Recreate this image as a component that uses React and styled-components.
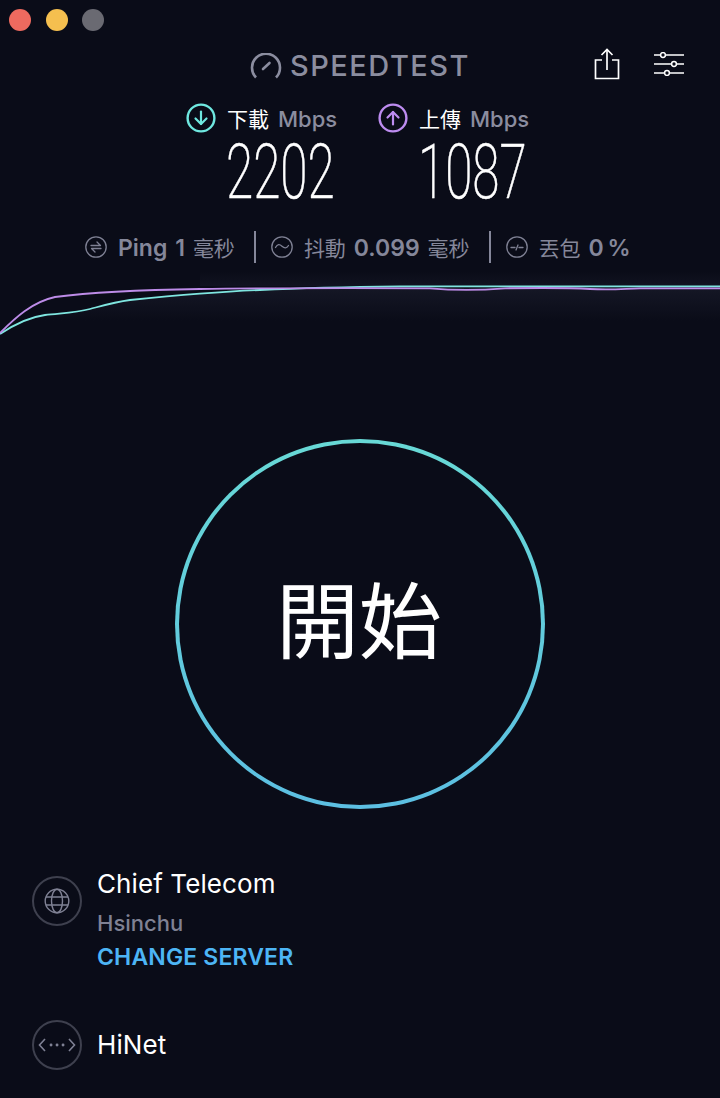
import styled, { createGlobalStyle } from "styled-components";

const GlobalStyle = createGlobalStyle`
  * {
    box-sizing: border-box;
  }

  body {
    margin: 0;
    background: #0a0c18;
    font-family: "Inter", "Noto Sans CJK TC", sans-serif;
  }
`;

function ArrowCircle({ color, up }) {
  return (
    <svg width="30" height="30" viewBox="0 0 30 30" fill="none" stroke={color}>
      <circle cx="15" cy="15" r="13.4" strokeWidth="2.4" />
      <g strokeWidth="2.2" strokeLinecap="round" strokeLinejoin="round" transform={up ? "rotate(180 15 15)" : undefined}>
        <path d="M15 8.5V21" />
        <path d="M9.5 15.5L15 21l5.5-5.5" />
      </g>
    </svg>
  );
}

function StatIcon({ children }) {
  return (
    <svg width="22" height="22" viewBox="0 0 22 22" fill="none" stroke="#7f8194" strokeWidth="1.3" strokeLinecap="round">
      <circle cx="11" cy="11" r="10.2" />
      {children}
    </svg>
  );
}

export default function App() {
  return (
    <>
      <GlobalStyle />
      <Page>
        <TitleBar>
          <Dot color="#ee6a5f" />
          <Dot color="#f5bf4f" />
          <Dot color="#6a6a72" />
        </TitleBar>

        <Header>
          <Logo>
            <svg width="32" height="26" viewBox="0 0 32 26" fill="none" stroke="#8b8d9f" strokeWidth="2.6" strokeLinecap="round">
              <path d="M6 24.5A14 14 0 1 1 26 24.5" strokeLinecap="butt" />
              <path d="M13 16l6.5-6" />
            </svg>
            <LogoText>SPEEDTEST</LogoText>
          </Logo>
          <Actions>
            <svg width="26" height="32" viewBox="0 0 26 32" fill="none" stroke="#fff" strokeWidth="1.7">
              <path d="M8 12H1.5v18.5h23V12H18" />
              <path d="M13 22V1.5" />
              <path d="M7.5 7L13 1.5 18.5 7" />
            </svg>
            <svg width="30" height="24" viewBox="0 0 30 24" fill="none" stroke="#fff" strokeWidth="1.5">
              <path d="M0 3h6M12 3h18M0 12h17M23 12h7M0 21h10M16 21h14" />
              <circle cx="9" cy="3" r="2.4" />
              <circle cx="20" cy="12" r="2.4" />
              <circle cx="13" cy="21" r="2.4" />
            </svg>
          </Actions>
        </Header>

        <Speeds>
          <Speed>
            <SpeedLabel>
              <ArrowCircle color="#6fe8e0" />
              <SpeedName>下載</SpeedName>
              <Unit>Mbps</Unit>
            </SpeedLabel>
            <SpeedValue>2202</SpeedValue>
          </Speed>
          <Speed>
            <SpeedLabel>
              <ArrowCircle color="#bd8cf0" up />
              <SpeedName>上傳</SpeedName>
              <Unit>Mbps</Unit>
            </SpeedLabel>
            <SpeedValue>1087</SpeedValue>
          </Speed>
        </Speeds>

        <Stats>
          <Stat>
            <StatIcon>
              <path d="M6 9.5h9.5L12 6M16 12.5H6.5L10 16" strokeLinejoin="round" />
            </StatIcon>
            <StatText>
              <b>Ping</b> <b>1</b> 毫秒
            </StatText>
          </Stat>
          <Divider />
          <Stat>
            <StatIcon>
              <path d="M4.5 11.5c2-3.5 4-3.5 6.5-1.2s4.5 2.3 6.5-.8" />
            </StatIcon>
            <StatText>
              抖動 <b>0.099</b> 毫秒
            </StatText>
          </Stat>
          <Divider />
          <Stat>
            <StatIcon>
              <path d="M5 11.5h4M13 11.5h4M10 14l2-5" />
            </StatIcon>
            <StatText>
              丟包 <Percent>0 %</Percent>
            </StatText>
          </Stat>
        </Stats>

        <Chart>
          <svg width="720" height="70" viewBox="0 270 720 70" fill="none">
            <defs>
              <linearGradient id="glowDown" x1="0" y1="0" x2="0" y2="1">
                <stop offset="0" stopColor="#1a1c2c" stopOpacity="0.7" />
                <stop offset="0.65" stopColor="#1a1c2c" stopOpacity="0" />
              </linearGradient>
              <linearGradient id="glowUp" x1="0" y1="1" x2="0" y2="0">
                <stop offset="0" stopColor="#1a1c2c" stopOpacity="0.4" />
                <stop offset="1" stopColor="#1a1c2c" stopOpacity="0" />
              </linearGradient>
            </defs>
            <rect x="200" y="272" width="520" height="15" fill="url(#glowUp)" />
            <path
              d="M0 335C15 325 30 318 45 316C62 314 75 314 90 310C105 306 115 303 130 301C170 297 210 293 260 291C300 289 330 288.5 360 288.5L720 288V340H0Z"
              fill="url(#glowDown)"
            />
            <path
              d="M0 335C15 325 30 318 45 316C62 314 75 314 90 310C105 306 115 303 130 301C170 297 210 293 260 291C300 289 330 288 400 287.3L720 287.3"
              stroke="#7fe6e0"
              strokeWidth="1.8"
            />
            <path
              d="M0 334C15 319 32 303 55 298C85 294 130 291 200 290C260 289 320 289 430 289.3C450 291 480 291.2 505 289.3C540 288.8 570 288.8 590 290C610 291.2 620 290 640 289.3L720 289.3"
              stroke="#bd8ce8"
              strokeWidth="1.8"
            />
          </svg>
        </Chart>

        <Start>開始</Start>

        <Servers>
          <Server>
            <ServerIcon>
              <svg width="26" height="26" viewBox="0 0 26 26" fill="none" stroke="#7f8194" strokeWidth="1.4">
                <circle cx="13" cy="13" r="11.8" />
                <ellipse cx="13" cy="13" rx="5.5" ry="11.8" />
                <path d="M2 9h22M2 17h22" />
              </svg>
            </ServerIcon>
            <ServerInfo>
              <ServerName>Chief Telecom</ServerName>
              <ServerCity>Hsinchu</ServerCity>
              <ChangeServer>CHANGE SERVER</ChangeServer>
            </ServerInfo>
          </Server>
          <Server center>
            <ServerIcon>
              <svg width="38" height="16" viewBox="0 0 38 16" fill="none" stroke="#7f8194" strokeWidth="1.6">
                <path d="M7 2L1.5 8L7 14M31 2L36.5 8L31 14" />
                <path d="M13 8h.1M19 8h.1M25 8h.1" strokeWidth="2.8" strokeLinecap="round" />
              </svg>
            </ServerIcon>
            <ServerName>HiNet</ServerName>
          </Server>
        </Servers>
      </Page>
    </>
  );
}

const Page = styled.div`
  width: 720px;
  height: 1098px;
  overflow: hidden;
  background: #0a0c18;
  color: #ffffff;
`;

const TitleBar = styled.div`
  height: 48px;
  padding: 9px 0 0 9px;

  display: flex;
  gap: 14.5px;
`;

const Dot = styled.span`
  width: 22px;
  height: 22px;
  border-radius: 50%;
  background: ${(props) => props.color};
`;

const Header = styled.div`
  position: relative;
  height: 36px;

  display: flex;
  justify-content: center;
  align-items: center;
`;

const Logo = styled.div`
  display: flex;
  align-items: center;
  gap: 8px;
`;

const LogoText = styled.span`
  font-size: 29px;
  font-weight: 500;
  line-height: 36px;
  letter-spacing: 1.5px;
  color: #8b8d9f;
`;

const Actions = styled.div`
  position: absolute;
  top: 0;
  left: 594px;

  display: flex;
  align-items: center;
  gap: 34px;
`;

const Speeds = styled.div`
  margin-top: 19px;
  padding-left: 186px;

  display: grid;
  grid-template-columns: 192px 192px;
`;

const Speed = styled.div`
  display: flex;
  flex-direction: column;
`;

const SpeedLabel = styled.div`
  height: 30px;

  display: flex;
  align-items: center;
`;

const SpeedName = styled.span`
  margin-left: 11px;
  font-size: 21px;
  color: #ffffff;
`;

const Unit = styled.span`
  margin-left: 9px;
  padding-top: 2px;
  font-size: 22px;
  font-weight: 500;
  color: #8b8d9f;
`;

const SpeedValue = styled.div`
  margin: 3px 0 0 40px;
  height: 72px;
  font-family: "Roboto", sans-serif;
  font-size: 76px;
  font-weight: 200;
  line-height: 72px;
  white-space: nowrap;
  -webkit-text-stroke: 0.5px #ffffff;
  transform: scaleX(0.65);
  transform-origin: left center;
`;

const Stats = styled.div`
  margin-top: 23px;
  padding-left: 85px;
  height: 32px;

  display: flex;
  align-items: center;
`;

const Stat = styled.div`
  display: flex;
  align-items: center;
  gap: 11px;
`;

const StatText = styled.span`
  font-size: 21px;
  word-spacing: 2px;
  color: #85879a;
  white-space: nowrap;

  b {
    font-size: 23px;
    font-weight: 600;
  }
`;

const Percent = styled.b`
  word-spacing: -2px;
`;

const Divider = styled.span`
  width: 2px;
  height: 32px;
  margin: 0 15px 0 19px;
  background: #85879a;
`;

const Chart = styled.div`
  margin-top: 6px;
  height: 70px;

  svg {
    display: block;
  }
`;

const Start = styled.button`
  display: flex;
  justify-content: center;
  align-items: center;

  width: 370px;
  height: 370px;
  margin: 100px auto 0;
  padding: 0 2px 16px 0;

  border: 4px solid transparent;
  border-radius: 50%;
  background:
    linear-gradient(#0a0c18, #0a0c18) padding-box,
    linear-gradient(#68d9d6, #5cbfe2) border-box;

  color: #ffffff;
  font-family: "Noto Sans CJK TC", sans-serif;
  font-size: 83px;
`;

const Servers = styled.div`
  margin-top: 67px;
  padding-left: 32px;

  display: flex;
  flex-direction: column;
  gap: 47px;
`;

const Server = styled.div`
  display: flex;
  align-items: ${(props) => (props.center ? "center" : "flex-start")};
  gap: 15px;
`;

const ServerIcon = styled.div`
  width: 50px;
  height: 50px;
  border: 2px solid #3e404e;
  border-radius: 50%;

  display: flex;
  justify-content: center;
  align-items: center;
  flex-shrink: 0;
`;

const ServerInfo = styled.div`
  display: flex;
  flex-direction: column;
  margin-top: -8px;
`;

const ServerName = styled.div`
  font-size: 26px;
  line-height: 32px;
  letter-spacing: 0.1px;
  color: #ffffff;
`;

const ServerCity = styled.div`
  margin-top: 7px;
  font-size: 22px;
  line-height: 32px;
  font-weight: 500;
  color: #7f8194;
`;

const ChangeServer = styled.div`
  margin-top: 2px;
  font-size: 23px;
  line-height: 32px;
  font-weight: 600;
  letter-spacing: 0.15px;
  color: #4db5f5;
`;
